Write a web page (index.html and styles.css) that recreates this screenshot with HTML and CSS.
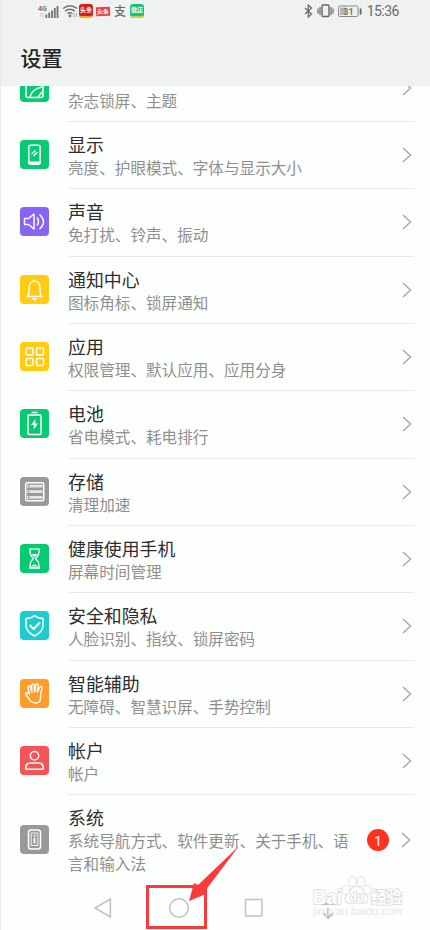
FILE: index.html
```html
<!DOCTYPE html>
<html lang="zh-CN">
<head>
<meta charset="utf-8">
<title>设置</title>
<link rel="stylesheet" href="styles.css">
</head>
<body>
<div class="phone">
  <header class="header">
    <div class="status">
      <div class="status-left">
        <svg width="22" height="16" viewBox="0 0 22 16"><text x="0" y="7.500" class="net">4G</text><path d="M3 10v4M2 11l1-1M5 10v4" stroke="#bbb" fill="none" stroke-width=".7"/><path d="M8.300 11.500V15M11.200 9.500V15M14 7.500V15M16.800 5V15M19.500 3V15" stroke="#777" stroke-width="1.900"/></svg>
        <svg class="wifi" width="16" height="14" viewBox="0 0 16 14"><path d="M1 4.500Q8-1.200 15 4.500M3.200 7.200Q8 3.200 12.800 7.200M5.500 9.700Q8 7.700 10.500 9.700" fill="none" stroke="#747474" stroke-width="1.500"/><circle cx="8" cy="12" r="1.400" fill="#747474"/><path d="M12 9v4M14.500 9v4" stroke="#aaa"/></svg>
        <span class="app app-red">头条</span>
        <span class="app app-flat">头条</span>
        <span class="pay">支</span>
        <span class="app app-green">微店</span>
      </div>
      <div class="status-right">
        <svg width="9" height="14" viewBox="0 0 9 14"><path d="M1 4l6.500 6L4.300 13V1l3.200 3L1 10" fill="none" stroke="#666" stroke-width="1.200"/></svg>
        <svg width="17" height="14" viewBox="0 0 17 14"><rect x="5" y="1" width="7" height="11.500" rx="1" fill="none" stroke="#666" stroke-width="1.400"/><path d="M3 3v8M14 3v8M1 4.500v5M16 4.500v5" stroke="#666" stroke-width="1.200"/></svg>
        <svg width="24" height="13" viewBox="0 0 24 13"><rect x=".6" y="1" width="19.500" height="10.500" rx="1.500" fill="none" stroke="#888"/><rect x="2" y="2.500" width="6" height="7.500" fill="#b5b5b5"/><path d="M22.600 3.500v6" stroke="#666" stroke-width="1.800"/><text x="10.500" y="9.500" text-anchor="middle" class="pct">31</text></svg>
        <span class="clock">15:36</span>
      </div>
    </div>
    <h1>设置</h1>
  </header>

  <main class="list">
    <section class="row">
      <svg class="icon green" viewBox="0 0 29 29"><rect x="6" y="6" width="17" height="18.500" rx="2"/><path d="M10 24Q12 16 22 14M18 24l4-5"/></svg>
      <div class="body"><div class="text"><p>杂志锁屏、主题</p></div><svg class="chev" viewBox="0 0 10 16"><path d="M1 1l7.500 7L1 15"/></svg></div>
    </section>
    <section class="row">
      <svg class="icon green" viewBox="0 0 29 29"><rect x="8.800" y="5.200" width="11.400" height="19" rx="2"/><path d="M9 22.700h11" stroke-width="2.300"/><path d="M11.500 14l4-3.500M13.500 16l4-3.700"/></svg>
      <div class="body"><div class="text"><h2>显示</h2><p>亮度、护眼模式、字体与显示大小</p></div><svg class="chev" viewBox="0 0 10 16"><path d="M1 1l7.500 7L1 15"/></svg></div>
    </section>
    <section class="row">
      <svg class="icon purple" viewBox="0 0 29 29"><path d="M4.500 11.500h4L14 7v15l-5.500-4.500h-4zM17 10.500q3 4 0 8M19.500 7.500q8 7 0 14.500"/></svg>
      <div class="body"><div class="text"><h2>声音</h2><p>免打扰、铃声、振动</p></div><svg class="chev" viewBox="0 0 10 16"><path d="M1 1l7.500 7L1 15"/></svg></div>
    </section>
    <section class="row">
      <svg class="icon yellow" viewBox="0 0 29 29"><path d="M6.500 21.500h16M8 21.500q1-3 1-8c0-4 2-7.500 5.500-7.500s5.500 3.500 5.500 7.500q0 5 1 8M14.500 4.500V6"/><path d="M12.200 23h4.600q-.6 2.500-2.300 2.500T12.200 23z" fill="#fff" stroke="none"/></svg>
      <div class="body"><div class="text"><h2>通知中心</h2><p>图标角标、锁屏通知</p></div><svg class="chev" viewBox="0 0 10 16"><path d="M1 1l7.500 7L1 15"/></svg></div>
    </section>
    <section class="row">
      <svg class="icon yellow" viewBox="0 0 29 29"><rect x="6" y="6" width="7" height="7" rx="1"/><rect x="16.500" y="6" width="7" height="7" rx="1"/><rect x="6" y="16.500" width="7" height="7" rx="1"/><rect x="16.500" y="16.500" width="7" height="7" rx="1"/></svg>
      <div class="body"><div class="text"><h2>应用</h2><p>权限管理、默认应用、应用分身</p></div><svg class="chev" viewBox="0 0 10 16"><path d="M1 1l7.500 7L1 15"/></svg></div>
    </section>
    <section class="row">
      <svg class="icon green" viewBox="0 0 29 29"><rect x="8" y="6" width="13" height="19.500" rx="1"/><path d="M11.500 3.500h6" stroke-width="1.600"/><path d="M15.500 10l-4.500 6h3l-.5 4.500 4.500-6h-3z" fill="#fff" stroke="none"/></svg>
      <div class="body"><div class="text"><h2>电池</h2><p>省电模式、耗电排行</p></div><svg class="chev" viewBox="0 0 10 16"><path d="M1 1l7.500 7L1 15"/></svg></div>
    </section>
    <section class="row">
      <svg class="icon grey" viewBox="0 0 29 29"><rect x="5.700" y="5.700" width="18" height="18" rx="1.500"/><path d="M7 9.200h15.500M7 14.700h15.500M7 20.300h15.500" stroke-width="2.800" stroke="#e4e4e4"/><path d="M8 9.200h1.500M8 14.700h1.500M8 20.300h1.500" stroke="#999"/></svg>
      <div class="body"><div class="text"><h2>存储</h2><p>清理加速</p></div><svg class="chev" viewBox="0 0 10 16"><path d="M1 1l7.500 7L1 15"/></svg></div>
    </section>
    <section class="row">
      <svg class="icon green" viewBox="0 0 29 29"><path d="M9 5.200h11M9 24h11M10 5.500c0 5 .5 6 3.500 9-3 3-3.500 4-3.500 9M19 5.500c0 5-.5 6-3.500 9 3 3 3.500 4 3.500 9" stroke-width="1.300"/><path d="M11.500 10h6l-3 3.500zM11 22.500q3.500-4 7 0z" fill="#fff" stroke="none"/></svg>
      <div class="body"><div class="text"><h2>健康使用手机</h2><p>屏幕时间管理</p></div><svg class="chev" viewBox="0 0 10 16"><path d="M1 1l7.500 7L1 15"/></svg></div>
    </section>
    <section class="row">
      <svg class="icon cyan" viewBox="0 0 29 29"><path d="M14.500 4.500q3.500 3 8.500 3v7q0 6-8.500 10.500Q6 20.500 6 14.500v-7q5 0 8.500-3z"/><path d="M9.500 14l4 4 6.500-6.500" stroke-width="2"/></svg>
      <div class="body"><div class="text"><h2>安全和隐私</h2><p>人脸识别、指纹、锁屏密码</p></div><svg class="chev" viewBox="0 0 10 16"><path d="M1 1l7.500 7L1 15"/></svg></div>
    </section>
    <section class="row">
      <svg class="icon orange" viewBox="0 0 29 29"><path d="M9.500 15L8 8.700q-.2-1.600 1-1.800 1.100-.1 1.500 1.300l1.500 5-.5-6.500q0-1.500 1.300-1.500t1.400 1.500l.5 6 .9-7q.2-1.200 1.400-1t1 1.500l-.7 7 2.300-5q.6-1.200 1.700-.7t.7 1.800q-1.800 5-1.500 10 .1 4.700-5 4.700-4 0-6-3.500l-3.700-5q-.9-1.200.2-1.700 1-.4 2 .4z" stroke-width="1.400"/></svg>
      <div class="body"><div class="text"><h2>智能辅助</h2><p>无障碍、智慧识屏、手势控制</p></div><svg class="chev" viewBox="0 0 10 16"><path d="M1 1l7.500 7L1 15"/></svg></div>
    </section>
    <section class="row">
      <svg class="icon red" viewBox="0 0 29 29"><circle cx="14.500" cy="9.800" r="4.200"/><path d="M5.800 23.200v-1.500q0-4.700 4.700-4.700h8q4.700 0 4.700 4.700v1.500z"/></svg>
      <div class="body"><div class="text"><h2>帐户</h2><p>帐户</p></div><svg class="chev" viewBox="0 0 10 16"><path d="M1 1l7.500 7L1 15"/></svg></div>
    </section>
    <section class="row tall">
      <svg class="icon grey" viewBox="0 0 29 29"><rect x="8.500" y="5" width="12" height="19" rx="2.500"/><rect x="11.200" y="8" width="6.600" height="12.500" stroke-width=".9"/><path d="M14.500 9.800v1.700M14.500 12.700v5.500" stroke-width="1.800"/></svg>
      <div class="body"><div class="text"><h2>系统</h2><p>系统导航方式、软件更新、关于手机、语言和输入法</p></div><span class="count">1</span><svg class="chev" viewBox="0 0 10 16"><path d="M1 1l7.500 7L1 15"/></svg></div>
    </section>
  </main>

  <nav class="nav">
    <svg width="20" height="22" viewBox="0 0 20 22"><path d="M17.400 2v18L2 11z"/></svg>
    <svg width="22" height="22" viewBox="0 0 22 22"><circle cx="11" cy="11" r="9.300"/></svg>
    <svg width="20" height="22" viewBox="0 0 20 22"><rect x="1.500" y="2.500" width="16.500" height="16.500" rx=".5"/></svg>
    <svg class="drop" width="18" height="18" viewBox="0 0 18 18"><path d="M1 2h16M9 6v10M4 11l5 5 5-5"/></svg>
  </nav>

  <div class="focus"></div>
  <svg class="arrow" width="56" height="60" viewBox="0 0 56 60"><path d="M55 3L14 42l-4-2-5 18 17-7-1-3z"/></svg>
  <svg class="mark" width="96" height="46" viewBox="0 0 96 46">
    <g class="paw"><ellipse cx="26" cy="17" rx="3.300" ry="4.200"/><ellipse cx="32.500" cy="8.500" rx="3.500" ry="4.600"/><ellipse cx="41" cy="8.500" rx="3.500" ry="4.600"/><ellipse cx="47.500" cy="17" rx="3.300" ry="4.200"/><path d="M36.500 14c5 0 6 4.500 9 7.500 4 4 2 9-3 8.500q-6-.7-12 0c-5 .5-7-4.500-3-8.500 3-3 4-7.500 9-7.500z"/></g>
    <text x="-7" y="31" class="bai" textLength="29" lengthAdjust="spacingAndGlyphs">Bai</text>
    <text x="29.500" y="27.500" class="du">du</text>
    <text x="51" y="29.500" class="exp">经验</text>
    <text x="-7" y="42" class="site" textLength="89" lengthAdjust="spacingAndGlyphs">jingyan.baidu.com</text>
  </svg>
</div>
</body>
</html>
```

FILE: styles.css
```css
* { box-sizing: border-box; margin: 0; padding: 0; }
body {
  width: 430px;
  height: 930px;
  overflow: hidden;
  background: #fdfefe;
  font-family: "Noto Sans CJK SC", sans-serif;
}
.phone {
  position: relative;
  display: flex;
  flex-direction: column;
  height: 930px;
  overflow: hidden;
  border-left: 1px solid #ebebeb;
}
.header {
  flex: none;
  height: 86px;
  background: #f0f1f1;
}
.status {
  display: flex;
  justify-content: space-between;
  height: 23px;
  padding: 0 31px 0 37px;
}
.status-left, .status-right { display: flex; align-items: center; }
.status-left { height: 22px; }
.status-right { height: 22px; gap: 4px; }
.status-left .wifi { margin-left: 2px; }
.net { font: bold 7px Roboto, sans-serif; fill: #777; }
.pct { font: bold 9px Roboto, sans-serif; fill: #777; }
.clock {
  margin-left: 1px;
  font: 14px/22px Roboto, sans-serif;
  letter-spacing: -.5px;
  color: #6b6b6b;
}
.app {
  width: 14px;
  height: 14px;
  border-radius: 3px;
  color: #fff;
  font-size: 6px;
  font-weight: 700;
  line-height: 12px;
  text-align: center;
  white-space: nowrap;
}
.app-red { margin-left: 1px; background: #db1d15; border-bottom: 2px solid #f1a52f; }
.app-flat { margin-left: 3px; height: 9px; border-radius: 0; line-height: 9px; background: #ed3c45; transform: rotate(-3deg); }
.pay { margin: 0 3px 0 4px; width: 13px; font-size: 12px; line-height: 20px; font-weight: 500; color: #666; }
.app-green { background: #1dbf79; border-bottom: 2px solid #c1cf50; }
h1 {
  margin: 18px 0 0 19.500px;
  font-size: 21px;
  line-height: 32px;
  font-weight: 500;
  color: #252525;
}
.list { flex: none; height: 798px; overflow: hidden; }
.row {
  display: flex;
  height: 67.33px;
  padding: 0 16px 0 19px;
}
.row:first-child { margin-top: -31.4px; }
.row:first-child .text { padding-top: 34px; }
.icon {
  flex: none;
  width: 29px;
  height: 29px;
  margin: 18.200px 19px 0 0;
  border-radius: 4px;
  fill: none;
  stroke: #fff;
  stroke-width: 1.500;
  stroke-linejoin: round;
}
.green { background: #07ca73; }
.purple { background: #8764f5; }
.yellow { background: #ffcc12; }
.grey { background: #999; }
.cyan { background: #1dccce; }
.orange { background: #ff9d2a; }
.red { background: #f35457; }
.body {
  display: flex;
  flex: 1;
  align-items: center;
  padding-right: 2px;
  border-bottom: 1px solid #e9eaea;
}
.text { flex: 1; align-self: flex-start; padding-top: 11px; }
h2 {
  font-size: 17.900px;
  line-height: 23px;
  font-weight: 400;
  color: #2d2d2d;
}
p {
  font-size: 15.600px;
  line-height: 22.800px;
  color: #8f8f8f;
}
.chev {
  flex: none;
  width: 10px;
  height: 16px;
  fill: none;
  stroke: #a9a9a9;
  stroke-width: 1.500;
}
.tall { height: 90px; }
.tall .icon { margin-top: 29.500px; }
.tall .body { border-bottom: 0; }
.tall .text { flex: 0 0 284px; }
.count {
  width: 22px;
  height: 22px;
  margin: 0 12px 0 15px;
  border-radius: 50%;
  background: #ff321f;
  color: #fff;
  font: 15px/22px "Noto Sans", sans-serif;
  text-align: center;
}
.nav {
  display: flex;
  align-items: center;
  height: 46px;
  padding: 2px 0 0 92px;
  gap: 54.500px;
}
.nav svg { fill: none; stroke: #c1c1c1; stroke-width: 1.500; }
.nav .drop { margin-top: 5px; stroke: #a8a8a8; }
.focus {
  position: absolute;
  left: 145px;
  top: 885px;
  width: 61px;
  height: 44px;
  border: 3px solid #fc3a3a;
}
.arrow { position: absolute; left: 183px; top: 843px; fill: #fc3a3a; }
.mark { position: absolute; left: 319px; top: 873px; overflow: visible; }
.mark text, .paw {
  fill: #fff;
  stroke: #dadada;
  stroke-width: 1.600;
  paint-order: stroke;
}
.bai { font: bold 20px "Liberation Sans", sans-serif; }
.du { font: bold 12px "Liberation Sans", sans-serif; }
.exp { font: bold 15.500px "Noto Sans CJK SC", sans-serif; }
.mark .site { font: 11px "Liberation Sans", sans-serif; fill: #e6e6e6; stroke: none; }
```
